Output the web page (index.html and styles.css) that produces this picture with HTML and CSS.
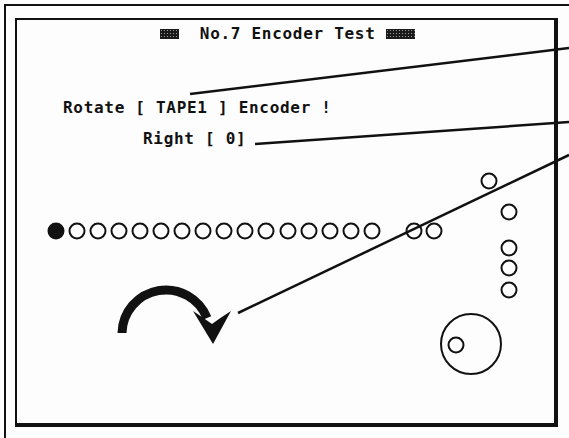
FILE: index.html
```html
<!DOCTYPE html>
<html>
<head>
  <title>No.7 Encoder Test</title>
  <link rel="stylesheet" href="styles.css">
</head>
<body>
  <div class="page">
    <div class="outer">
      <div class="screen">
        <div class="title"><span class="blk b2"></span>  No.7 Encoder Test <span class="blk b3"></span></div>
        <div class="msg">Rotate [ TAPE1 ] Encoder !</div>
        <div class="dir">Right [ 0]</div>
      </div>
    </div>
    <svg class="overlay" width="569" height="438" viewBox="0 0 569 438">
      <g class="leds">
        <circle class="on" cx="56" cy="231" r="7.5" />
        <circle cx="77" cy="231" r="7.5" />
        <circle cx="98" cy="231" r="7.5" />
        <circle cx="119" cy="231" r="7.5" />
        <circle cx="140" cy="231" r="7.5" />
        <circle cx="161" cy="231" r="7.5" />
        <circle cx="182" cy="231" r="7.5" />
        <circle cx="203" cy="231" r="7.5" />
        <circle cx="224" cy="231" r="7.5" />
        <circle cx="245" cy="231" r="7.5" />
        <circle cx="266" cy="231" r="7.5" />
        <circle cx="288" cy="231" r="7.5" />
        <circle cx="309" cy="231" r="7.5" />
        <circle cx="330" cy="231" r="7.5" />
        <circle cx="351" cy="231" r="7.5" />
        <circle cx="372" cy="231" r="7.5" />
        <circle cx="414" cy="231" r="7.5" />
        <circle cx="434" cy="231" r="7.5" />
        <circle cx="489" cy="181" r="7.5" />
        <circle cx="509" cy="212" r="7.5" />
        <circle cx="509" cy="248" r="7.5" />
        <circle cx="509" cy="268" r="7.5" />
        <circle cx="509" cy="290" r="7.5" />
      </g>
      <g class="knob">
        <circle cx="471" cy="344" r="30" />
        <circle cx="456" cy="345" r="7.5" />
      </g>
      <g class="turn">
        <path class="arc" d="M122 333 A44 44 0 0 1 207 318" />
        <path class="head" d="M193 311 Q205 319 212 324 Q220 318 231 311 L213 344 Z" />
      </g>
      <g class="callouts">
        <line x1="190" y1="94" x2="569" y2="48" />
        <line x1="255" y1="144" x2="569" y2="122" />
        <line x1="238" y1="313" x2="569" y2="155" />
      </g>
    </svg>
  </div>
</body>
</html>
```

FILE: styles.css
```css
body {
  margin: 0;
  background: #fdfdfd;
  color: #111;
  font-family: 'DejaVu Sans Mono', monospace;
  font-weight: bold;
  font-size: 16px;
}
.page {
  position: relative;
  width: 569px;
  height: 438px;
  overflow: hidden;
}
.outer {
  margin: 4px 0 0 4px;
  height: 434px;
  padding: 12px 0 0 9px;
  border-top: 2px solid #111;
  border-left: 2px solid #111;
  box-sizing: border-box;
}
.screen {
  width: 543px;
  height: 409px;
  border: 2px solid #111;
  border-right-width: 4px;
  border-bottom-width: 4px;
  box-sizing: border-box;
  line-height: 16px;
  letter-spacing: 0.7px;
}
.title, .msg, .dir {
  white-space: pre;
}
.title {
  margin-top: 6px;
  padding-left: 4px;
  text-align: center;
}
.blk {
  display: inline-block;
  height: 10px;
  vertical-align: 0px;
  background-color: #1a1a1a;
  background-image: radial-gradient(circle, #9a9a9a 0.6px, transparent 1px);
  background-size: 3px 3px;
}
.b2 {
  width: 19px;
}
.b3 {
  width: 29px;
}
.msg {
  margin-top: 58px;
  padding-left: 46px;
}
.dir {
  margin-top: 15px;
  padding-left: 126px;
}
.overlay {
  position: absolute;
  left: 0;
  top: 0;
}
.leds circle, .knob circle {
  fill: none;
  stroke: #111;
  stroke-width: 2;
}
.leds circle.on {
  fill: #111;
}
.arc {
  fill: none;
  stroke: #111;
  stroke-width: 9;
}
.head {
  fill: #111;
}
.callouts line {
  stroke: #111;
  stroke-width: 2.5;
}
```
